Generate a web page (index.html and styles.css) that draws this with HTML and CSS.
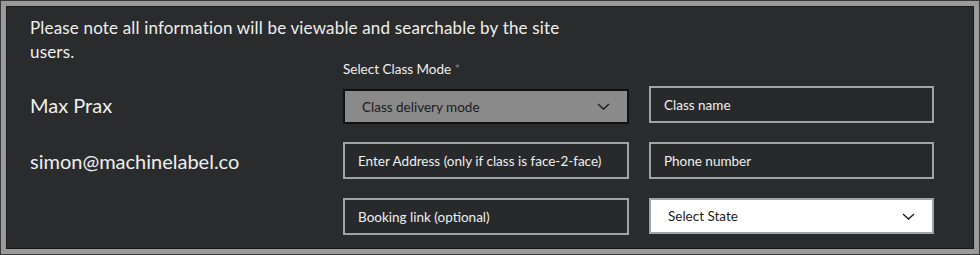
FILE: index.html
```html
<!DOCTYPE html>
<html lang="en">
<head>
    <meta charset="UTF-8">
    <title>Class details</title>
    <link rel="stylesheet" href="styles.css">
</head>
<body>
    <div class="panel">
        <p class="note">Please note all information will be viewable and searchable by the site users.</p>
        <div class="content">
            <div class="people">
                <div class="person">Max Prax</div>
                <div class="person">simon@machinelabel.co</div>
            </div>
            <div class="class-form">
                <div class="form-label">Select Class Mode <span class="req">*</span></div>
                <div class="fields">
                    <div class="dropdown mode">
                        <span>Class delivery mode</span>
                        <svg class="chevron" width="13" height="7" viewBox="0 0 13 7"><path d="M1 1l5.5 5 5.5-5" fill="none" stroke="currentColor" stroke-width="1.3"/></svg>
                    </div>
                    <div class="field">Class name</div>
                    <div class="field">Enter Address (only if class is face-2-face)</div>
                    <div class="field">Phone number</div>
                    <div class="field">Booking link (optional)</div>
                    <div class="dropdown state">
                        <span>Select State</span>
                        <svg class="chevron" width="13" height="7" viewBox="0 0 13 7"><path d="M1 1l5.5 5 5.5-5" fill="none" stroke="currentColor" stroke-width="1.3"/></svg>
                    </div>
                </div>
            </div>
        </div>
    </div>
</body>
</html>
```

FILE: styles.css
```css
body {
    margin: 0;
    background-color: #3a3a3a;
    font-family: Lato, 'Noto Sans', sans-serif;
}
.panel {
    box-sizing: border-box;
    width: 978px;
    height: 253px;
    margin: 1px;
    border: 5px solid #9a9a9a;
    box-shadow: inset 0 0 0 1px #1a1a1a;
    background-color: #2a2b2d;
    color: #efefef;
    padding: 10px 24px 0 24px;
}
.note {
    margin: 0;
    width: 560px;
    font-size: 17px;
    letter-spacing: 0.17px;
    line-height: 23.5px;
}
.content {
    display: flex;
    gap: 20px;
}
.people {
    width: 293px;
    padding-top: 23px;
}
.person {
    height: 37px;
    display: flex;
    align-items: center;
    margin-bottom: 19px;
    font-size: 20px;
}
.class-form {
    width: 591px;
}
.form-label {
    font-size: 13.5px;
    line-height: 12px;
    margin-bottom: 11px;
}
.form-label .req {
    color: #8a8a8a;
    font-size: 12px;
    vertical-align: top;
}
.fields {
    display: grid;
    grid-template-columns: 286px 285px;
    grid-auto-rows: 37px;
    gap: 19px 20px;
}
.field {
    box-sizing: border-box;
    border: 2px solid #a3a3a3;
    background-color: #28292b;
    padding: 0 13px;
    display: flex;
    align-items: center;
    font-size: 13.5px;
}
.dropdown {
    box-sizing: border-box;
    display: flex;
    align-items: center;
    justify-content: space-between;
    padding: 0 17px 0 17px;
    font-size: 13.5px;
}
.dropdown.mode {
    height: 35px;
    margin-top: 3px;
    border: 2px solid #111;
    background-color: #8a8a8a;
    color: #1c1c1c;
}
.dropdown.state {
    height: 36px;
    border: 2px solid #a3a3a3;
    background-color: #fff;
    color: #1c1c1c;
}
.chevron {
    display: block;
}
```
